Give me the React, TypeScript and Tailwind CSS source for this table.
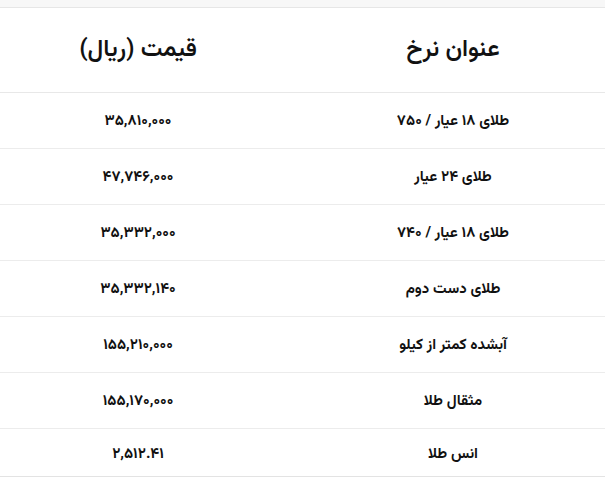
import React from "react";

const rows: [string, string][] = [
  ["طلای ۱۸ عیار / ۷۵۰", "۳۵,۸۱۰,۰۰۰"],
  ["طلای ۲۴ عیار", "۴۷,۷۴۶,۰۰۰"],
  ["طلای ۱۸ عیار / ۷۴۰", "۳۵,۳۳۲,۰۰۰"],
  ["طلای دست دوم", "۳۵,۳۳۲,۱۴۰"],
  ["آبشده کمتر از کیلو", "۱۵۵,۲۱۰,۰۰۰"],
  ["مثقال طلا", "۱۵۵,۱۷۰,۰۰۰"],
  ["انس طلا", "۲,۵۱۲.۴۱"],
];

export default function App() {
  return (
    <div
      className="w-[605px] h-[484px] bg-white text-[#111] overflow-hidden"
      style={{ fontFamily: 'Vazirmatn, "Noto Sans Arabic", "DejaVu Sans", sans-serif' }}
    >
      <div className="h-[7px] bg-[#f7f7f7]" />
      <div className="w-[630px] border-t border-[#e6e6e6]">
        <div className="grid grid-cols-[276px_354px] h-[85px] items-center border-b border-[#e8e8e8]">
          <div className="text-center text-[24px] font-semibold" dir="rtl">قیمت (ریال)</div>
          <div className="text-center text-[24px] font-semibold" dir="rtl">عنوان نرخ</div>
        </div>
        {rows.map(([title, price], i) => (
          <div
            key={i}
            className={
              i === rows.length - 1
                ? "grid grid-cols-[276px_354px] h-[48px] pt-[5px] items-center border-b border-[#e3e3e3]"
                : "grid grid-cols-[276px_354px] h-[56px] pt-[4px] items-center border-b border-[#ececec]"
            }
          >
            <div className="text-center text-[15px] font-bold" dir="rtl">{price}</div>
            <div className="text-center text-[15px] font-bold" dir="rtl">{title}</div>
          </div>
        ))}
      </div>
    </div>
  );
}
